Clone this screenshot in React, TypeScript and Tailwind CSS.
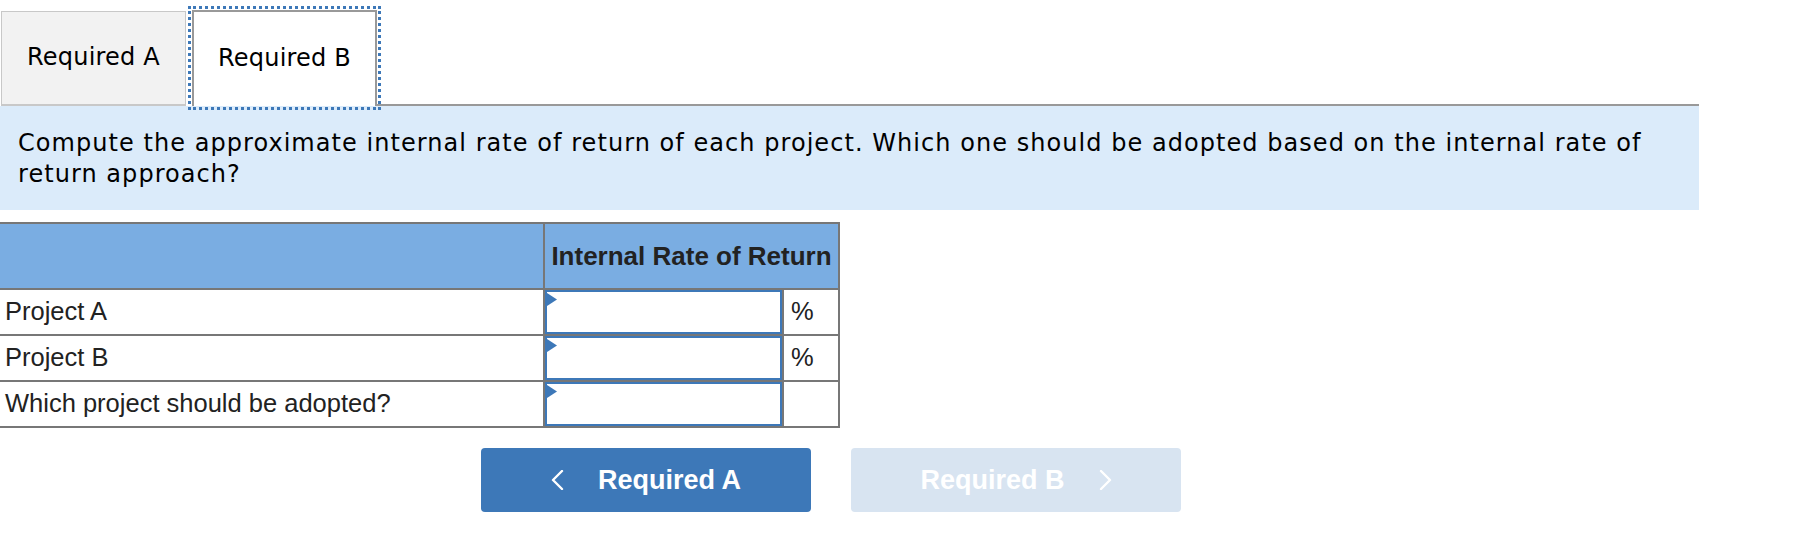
import React from "react";

const verdana = { fontFamily: '"DejaVu Sans", Verdana, sans-serif' };
const arial = { fontFamily: '"Liberation Sans", Arial, sans-serif' };

type Row = { label: string; unit: string };

const rows: Row[] = [
  { label: "Project A", unit: "%" },
  { label: "Project B", unit: "%" },
  { label: "Which project should be adopted?", unit: "" },
];

// Answer box with the little blue marker in its top-left corner.
function AnswerInput() {
  return (
    <div className="relative h-[44px] w-full border-2 border-[#3d78b8] bg-white">
      <svg className="absolute left-0 top-[1px]" width="10" height="13" viewBox="0 0 10 13">
        <polygon points="0,0 10,6.5 0,13" fill="#3d78b8" />
      </svg>
    </div>
  );
}

function Chevron({ dir }: { dir: "left" | "right" }) {
  return (
    <svg width="13" height="20" viewBox="0 0 13 20" fill="none" stroke="currentColor" strokeWidth="2.4" strokeLinecap="round" strokeLinejoin="round">
      {dir === "left" ? <polyline points="11,1 2,10 11,19" /> : <polyline points="2,1 11,10 2,19" />}
    </svg>
  );
}

export default function App() {
  return (
    <div className="min-h-[537px] w-[1803px] bg-white pt-[10px]">
      {/* Tabs */}
      <div className="flex h-[96px] w-[1699px] items-end">
        <div
          className="ml-[1px] flex h-[95px] w-[185px] items-center justify-center border border-b-2 border-[#c8c8c8] bg-[#f2f2f2] pb-[2px] text-[24px] tracking-[0.2px] text-black"
          style={verdana}
        >
          Required A
        </div>
        <div
          className="relative ml-[6px] flex h-[96px] w-[185px] items-center justify-center border-2 border-b-0 border-[#999999] bg-white pb-[2px] text-[24px] tracking-[0.2px] text-black outline-[3px] outline-dotted outline-offset-[1px] outline-[#3d78b8]"
          style={verdana}
        >
          Required B
        </div>
        <div className="flex-1 border-b-2 border-[#999999]" />
      </div>

      {/* Prompt */}
      <div
        className="w-[1699px] bg-[#dbebfa] px-[18px] pb-[20px] pt-[22px] text-[24px] leading-[31px] tracking-[1.05px] text-black"
        style={verdana}
      >
        Compute the approximate internal rate of return of each project. Which one should be adopted based on the internal rate of return approach?
      </div>

      {/* Answer table */}
      <table className="mt-[12px] w-[840px] border-collapse text-[#222222]" style={arial}>
        <thead>
          <tr className="h-[66px] bg-[#7aade2]">
            <th className="w-[544px] border-2 border-l-0 border-[#777777]" />
            <th colSpan={2} className="border-2 border-[#777777] text-center text-[26px] font-bold text-[#222222]">
              Internal Rate of Return
            </th>
          </tr>
        </thead>
        <tbody>
          {rows.map((r) => (
            <tr key={r.label} className="h-[46px]">
              <td className="border-2 border-l-0 border-[#777777] pl-[5px] text-[25.5px] leading-none">{r.label}</td>
              <td className="w-[239px] border-2 border-[#777777] p-0">
                <AnswerInput />
              </td>
              <td className="border-2 border-[#777777] pl-[7px] text-[25.5px] leading-none">{r.unit}</td>
            </tr>
          ))}
        </tbody>
      </table>

      {/* Navigation buttons */}
      <div className="ml-[481px] mt-[20px] flex gap-[40px]" style={arial}>
        <button className="flex h-[64px] w-[330px] items-center justify-center gap-[34px] rounded-[4px] bg-[#3d78b8] text-[27px] font-bold text-white">
          <Chevron dir="left" />
          <span>Required A</span>
        </button>
        <button className="flex h-[64px] w-[330px] items-center justify-center gap-[34px] rounded-[4px] bg-[#d8e4f1] text-[27px] font-bold text-white">
          <span>Required B</span>
          <Chevron dir="right" />
        </button>
      </div>
    </div>
  );
}
